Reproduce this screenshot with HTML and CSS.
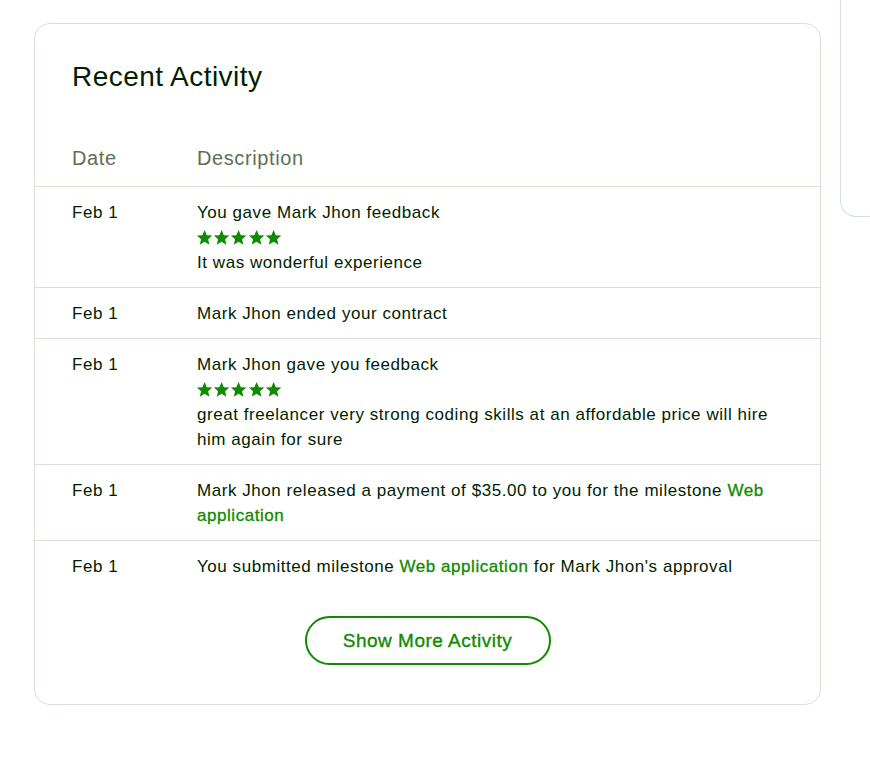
FILE: index.html
```html
<!DOCTYPE html>
<html lang="en">
<head>
<meta charset="utf-8">
<title>Recent Activity</title>
<link rel="stylesheet" href="styles.css">
</head>
<body>
<div class="page">
  <section class="card">
    <h2 class="title">Recent Activity</h2>
    <div class="table">
      <div class="row head">
        <div class="date">Date</div>
        <div class="desc">Description</div>
      </div>
      <div class="row">
        <div class="date">Feb 1</div>
        <div class="desc">
          <p>You gave Mark Jhon feedback</p>
          <div class="stars">
            <svg viewBox="0 0 24 24"><path d="M12 1.5l3.1 7.1 7.7.6-5.9 5.1 1.8 7.6L12 17.8l-6.7 4.1 1.8-7.6-5.9-5.1 7.7-.6z"/></svg>
            <svg viewBox="0 0 24 24"><path d="M12 1.5l3.1 7.1 7.7.6-5.9 5.1 1.8 7.6L12 17.8l-6.7 4.1 1.8-7.6-5.9-5.1 7.7-.6z"/></svg>
            <svg viewBox="0 0 24 24"><path d="M12 1.5l3.1 7.1 7.7.6-5.9 5.1 1.8 7.6L12 17.8l-6.7 4.1 1.8-7.6-5.9-5.1 7.7-.6z"/></svg>
            <svg viewBox="0 0 24 24"><path d="M12 1.5l3.1 7.1 7.7.6-5.9 5.1 1.8 7.6L12 17.8l-6.7 4.1 1.8-7.6-5.9-5.1 7.7-.6z"/></svg>
            <svg viewBox="0 0 24 24"><path d="M12 1.5l3.1 7.1 7.7.6-5.9 5.1 1.8 7.6L12 17.8l-6.7 4.1 1.8-7.6-5.9-5.1 7.7-.6z"/></svg>
          </div>
          <p>It was wonderful experience</p>
        </div>
      </div>
      <div class="row">
        <div class="date">Feb 1</div>
        <div class="desc"><p>Mark Jhon ended your contract</p></div>
      </div>
      <div class="row">
        <div class="date">Feb 1</div>
        <div class="desc">
          <p>Mark Jhon gave you feedback</p>
          <div class="stars">
            <svg viewBox="0 0 24 24"><path d="M12 1.5l3.1 7.1 7.7.6-5.9 5.1 1.8 7.6L12 17.8l-6.7 4.1 1.8-7.6-5.9-5.1 7.7-.6z"/></svg>
            <svg viewBox="0 0 24 24"><path d="M12 1.5l3.1 7.1 7.7.6-5.9 5.1 1.8 7.6L12 17.8l-6.7 4.1 1.8-7.6-5.9-5.1 7.7-.6z"/></svg>
            <svg viewBox="0 0 24 24"><path d="M12 1.5l3.1 7.1 7.7.6-5.9 5.1 1.8 7.6L12 17.8l-6.7 4.1 1.8-7.6-5.9-5.1 7.7-.6z"/></svg>
            <svg viewBox="0 0 24 24"><path d="M12 1.5l3.1 7.1 7.7.6-5.9 5.1 1.8 7.6L12 17.8l-6.7 4.1 1.8-7.6-5.9-5.1 7.7-.6z"/></svg>
            <svg viewBox="0 0 24 24"><path d="M12 1.5l3.1 7.1 7.7.6-5.9 5.1 1.8 7.6L12 17.8l-6.7 4.1 1.8-7.6-5.9-5.1 7.7-.6z"/></svg>
          </div>
          <p class="long">great freelancer very strong coding skills at an affordable price will hire him again for sure</p>
        </div>
      </div>
      <div class="row">
        <div class="date">Feb 1</div>
        <div class="desc"><p class="long">Mark Jhon released a payment of $35.00 to you for the milestone <a class="link" href="#">Web application</a></p></div>
      </div>
      <div class="row last">
        <div class="date">Feb 1</div>
        <div class="desc"><p>You submitted milestone <a class="link" href="#">Web application</a> for Mark Jhon's approval</p></div>
      </div>
    </div>
    <div class="actions">
      <button class="more" type="button">Show More Activity</button>
    </div>
  </section>
  <aside class="side"></aside>
</div>
</body>
</html>
```
FILE: styles.css
```css
* { box-sizing: border-box; }
html, body { margin: 0; padding: 0; background: #fff; }
body {
  font-family: "Liberation Sans", Arial, sans-serif;
  color: #001e00;
}
.page {
  display: flex;
  align-items: flex-start;
  gap: 19px;
  padding: 23px 0 0 34px;
  width: 870px;
  overflow: hidden;
  height: 762px;
}
.card {
  flex: 0 0 787px;
  border: 1px solid #d5e0d5;
  border-radius: 16px;
  padding: 0 0 39px;
}
.title {
  margin: 0;
  padding: 35px 37px 0;
  font-size: 28px;
  font-weight: 500;
  line-height: 36px;
  letter-spacing: 0.45px;
  color: #001e00;
}
.table { margin-top: 51px; }
.row {
  display: flex;
  padding: 14px 37px 12px;
  border-bottom: 1px solid #d5e0d5;
  font-size: 17px;
  line-height: 24px;
  letter-spacing: 0.55px;
  color: #001e00;
}
.row.last { border-bottom: none; }
.row.head {
  padding: 0 37px 16px;
  font-size: 20px;
  line-height: 24px;
  color: #5e6d55;
  letter-spacing: 0.6px;
}
.date { flex: 0 0 125px; }
.desc { flex: 1; }
.desc p { margin: 0; }
.desc p.long { line-height: 24.5px; }
.stars {
  display: flex;
  gap: 0;
  height: 26px;
  align-items: center;
  margin-left: -1px;
}
.stars svg { width: 17.2px; height: 17.2px; fill: #108a00; }
.link {
  color: #108a00;
  text-decoration: none;
  -webkit-text-stroke: 0.3px #108a00;
}
.actions {
  display: flex;
  justify-content: center;
  padding-top: 25px;
}
.more {
  width: 246px;
  height: 49px;
  border: 2px solid #108a00;
  border-radius: 25px;
  background: #fff;
  color: #108a00;
  font-family: "Liberation Sans", Arial, sans-serif;
  font-size: 19px;
  font-weight: 400;
  letter-spacing: 0.5px;
  -webkit-text-stroke: 0.35px #108a00;
  cursor: pointer;
}
.side {
  flex: 0 0 200px;
  height: 217px;
  margin-top: -23px;
  border: 1px solid #d5e0d5;
  border-top: none;
  border-right: none;
  border-radius: 0 0 0 16px;
}
```
